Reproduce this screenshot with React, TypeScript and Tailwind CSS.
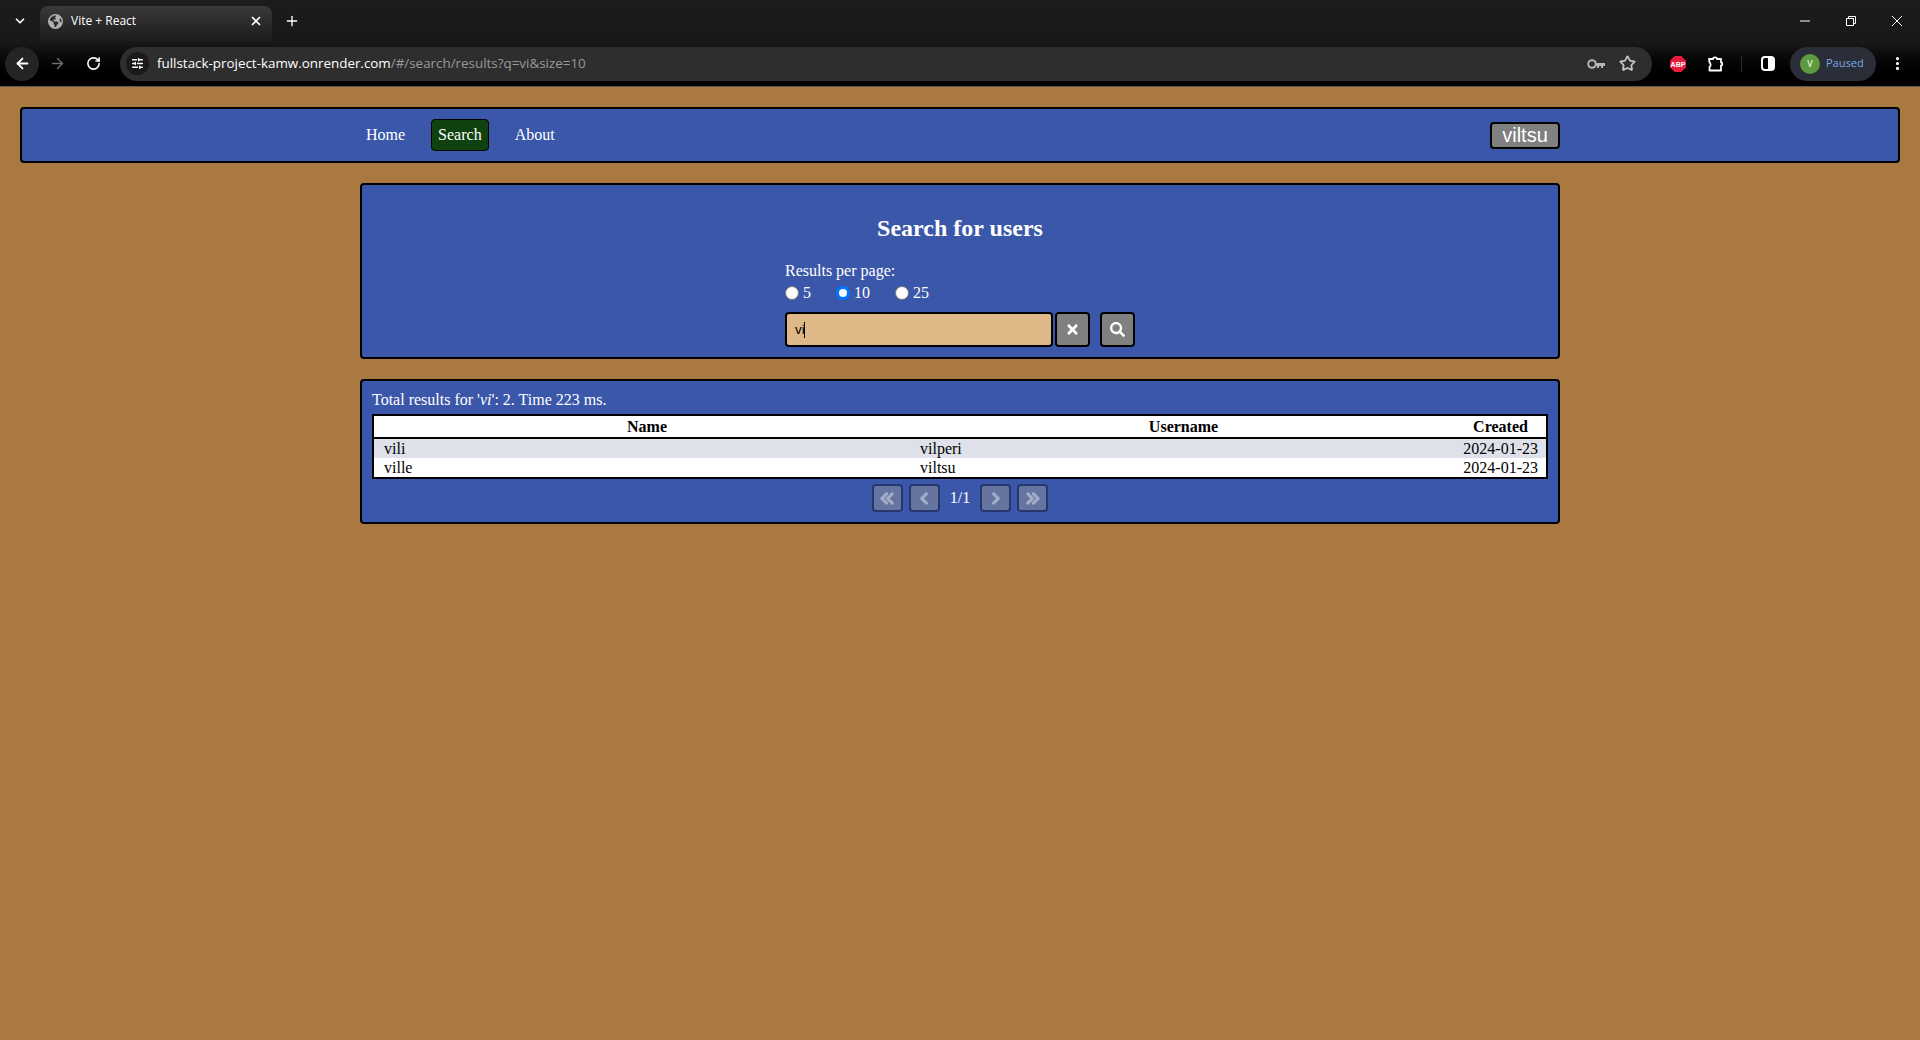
import { FaSearch, FaTimes } from 'react-icons/fa';
import { FaAngleLeft, FaAngleRight, FaAnglesLeft, FaAnglesRight, FaEarthAmericas } from 'react-icons/fa6';
import { ArrowLeft, ArrowRight, ChevronDown, MoreVertical, Plus, RotateCw, SlidersHorizontal, Star, X } from 'lucide-react';

const users = [
  { name: 'vili', username: 'vilperi', created: '2024-01-23' },
  { name: 'ville', username: 'viltsu', created: '2024-01-23' },
];

const sizes = [
  { label: '5', checked: false, width: 'w-[51px]' },
  { label: '10', checked: true, width: 'w-[59px]' },
  { label: '25', checked: false, width: 'w-auto' },
];

const BrowserBar = () => (
  <div className="h-[87px] border-b border-[#5a5a5a] bg-linear-to-b from-[#1c1c1c] via-[#181818] to-[#000000] text-white font-['Open_Sans',sans-serif]">
    {/* Tab strip */}
    <div className="flex h-[41px] items-end">
      <div className="flex h-[35px] w-[40px] items-center justify-center pb-[5px]">
        <ChevronDown size={14} strokeWidth={3} />
      </div>
      <div className="flex h-[35px] w-[232px] items-center rounded-t-lg bg-linear-to-b from-[#3a3a3a] to-[#1c1c1c] pr-[9px] pb-[5px] pl-2 text-[12px]">
        <FaEarthAmericas size={15} className="text-[#b0b0b0]" />
        <span className="ml-2 flex-1">Vite + React</span>
        <X size={14} strokeWidth={3} />
      </div>
      <div className="flex h-[35px] w-[40px] items-center justify-center pb-[5px]">
        <Plus size={16} />
      </div>
      <div className="ml-auto flex h-[41px] items-center gap-[36px] pr-[18px]">
        <svg width="10" height="10" viewBox="0 0 10 10" fill="none" stroke="white">
          <path d="M0 5H10" />
        </svg>
        <svg width="10" height="10" viewBox="0 0 10 10" fill="none" stroke="white">
          <path d="M2.5 2.5V.5H9.5V7.5H7.5M.5 2.5H7.5V9.5H.5Z" />
        </svg>
        <svg width="10" height="10" viewBox="0 0 10 10" fill="none" stroke="white">
          <path d="M0 0L10 10M10 0L0 10" />
        </svg>
      </div>
    </div>

    {/* Address row */}
    <div className="flex h-[45px] items-center">
      <div className="flex w-[120px] items-center pl-[5px]">
        <div className="flex h-[34px] w-[34px] items-center justify-center rounded-full bg-[#242424]">
          <ArrowLeft size={17} strokeWidth={2.5} />
        </div>
        <ArrowRight size={17} strokeWidth={2} className="ml-[10px] text-[#707070]" />
        <RotateCw size={15} strokeWidth={2.5} className="ml-[20px]" />
      </div>
      <div className="flex h-[34px] w-[1532px] items-center rounded-full bg-[#2e2e2e] pr-[16px] pl-[6px]">
        <div className="flex h-[23px] w-[23px] items-center justify-center rounded-full bg-[#1a1a1a]">
          <SlidersHorizontal size={13} strokeWidth={2.5} />
        </div>
        <span className="ml-[8px] text-[13.4px]">fullstack-project-kamw.onrender.com</span>
        <span className="text-[13.4px] text-[#9a9a9a]">/#/search/results?q=vi&amp;size=10</span>
        <svg width="18" height="12" viewBox="0 0 18 12" fill="none" className="ml-auto text-[#b5b5b5]">
          <circle cx="5" cy="6" r="3.8" stroke="currentColor" strokeWidth="2" />
          <path d="M9 5H18V8H16V10H14V8H12V10H10V8H9Z" fill="currentColor" />
        </svg>
        <Star size={17} strokeWidth={2.5} className="ml-[14px] text-[#c4c4c4]" />
      </div>
      <svg width="16" height="16" viewBox="0 0 16 16" className="ml-[18px]">
        <polygon points="4.7,0 11.3,0 16,4.7 16,11.3 11.3,16 4.7,16 0,11.3 0,4.7" fill="#e8193c" />
        <text x="8" y="10.5" textAnchor="middle" fontSize="7" fontWeight="700" fill="white" fontFamily="'Liberation Sans', sans-serif">ABP</text>
      </svg>
      <svg width="16" height="16" viewBox="0 0 16 16" fill="none" stroke="white" strokeWidth="1.8" strokeLinejoin="round" className="ml-[21px]">
        <path d="M2 3H6C6 .8 10 .8 10 3H14V6.5C16 6.5 16 9.5 14 9.5V14.5H2.5V11C4 10 4 7.5 2.5 6.5Z" />
      </svg>
      <div className="ml-[18px] h-[16px] w-px bg-[#2a2a2a]" />
      <div className="ml-[19px] flex h-[15px] w-[14px] rounded-sm border-2 border-white">
        <div className="w-1/2" />
        <div className="w-1/2 bg-white" />
      </div>
      <div className="ml-[15px] flex h-[34px] w-[86px] items-center rounded-full bg-[#2a2e38] pl-[10px]">
        <div className="flex h-[20px] w-[20px] items-center justify-center rounded-full bg-[#5e9b3f] text-[9px]">V</div>
        <span className="ml-[6px] text-[11px] text-[#7ea6e0]">Paused</span>
      </div>
      <MoreVertical size={17} strokeWidth={2.5} className="ml-[13px]" />
    </div>
  </div>
);

const Panel = ({ className, children }: { className: string; children: React.ReactNode }) => (
  <div className={`rounded border-2 border-black bg-[#3b57a9] ${className}`}>{children}</div>
);

const PageButton = ({ children }: { children: React.ReactNode }) => (
  <button className="flex h-[28px] w-[31px] items-center justify-center rounded border-2 border-[#26376f] bg-[#65759f] text-[#a5aecb]">
    {children}
  </button>
);

const App = () => {
  return (
    <div className="h-[1040px] overflow-hidden bg-[#aa7941] font-['Liberation_Serif',serif] text-[16px] text-white">
      <BrowserBar />

      {/* Nav */}
      <div className="mx-5 mt-[20px] flex h-[56px] justify-center rounded border-2 border-black bg-[#3b57a9]">
        <div className="flex w-[1200px] items-center justify-between">
          <div className="flex items-center gap-[26px] pl-[6px] leading-[18px]">
            <a>Home</a>
            <a className="rounded border border-black bg-[#104210] px-[6px] py-[6px]">Search</a>
            <a>About</a>
          </div>
          <button className="h-[27px] w-[70px] rounded border-2 border-black bg-[#808080] font-['Liberation_Sans',sans-serif] text-[20px] leading-none">
            viltsu
          </button>
        </div>
      </div>

      <div className="mx-auto w-[1200px]">
        {/* Search */}
        <Panel className="mt-[20px] h-[176px]">
          <h1 className="pt-[30px] text-center text-[24px] leading-[27px] font-bold">Search for users</h1>
          <div className="mt-[20px] ml-[423px]">
            <p className="leading-[18px]">Results per page:</p>
            <div className="mt-[4px] flex h-[18px] items-center">
              {sizes.map((size) => (
                <label key={size.label} className={`flex items-center ${size.width}`}>
                  <span
                    className={`h-[14px] w-[14px] rounded-full bg-white ${
                      size.checked ? 'border-[3px] border-[#0075ff]' : 'border border-[#767676]'
                    }`}
                  />
                  <span className="ml-[4px]">{size.label}</span>
                </label>
              ))}
            </div>
            <div className="mt-[10px] flex h-[35px]">
              <div className="flex w-[268px] items-center rounded border-2 border-black bg-[#deb887] pl-2 font-['Liberation_Sans',sans-serif] text-[13.33px] text-black">
                vi<span className="-ml-px h-[16px] w-px bg-black" />
              </div>
              <button className="ml-[2px] flex w-[35px] items-center justify-center rounded border-2 border-black bg-[#808080]">
                <FaTimes size={15} />
              </button>
              <button className="ml-[10px] flex w-[35px] items-center justify-center rounded border-2 border-black bg-[#808080]">
                <FaSearch size={15} />
              </button>
            </div>
          </div>
        </Panel>

        {/* Results */}
        <Panel className="mt-[20px] h-[145px] px-[10px]">
          <p className="pt-[10px] leading-[18px]">
            Total results for '<i>vi</i>': 2. Time 223 ms.
          </p>
          <table className="mt-[5px] w-full table-fixed border-2 border-black bg-white leading-[18px] text-black">
            <thead>
              <tr className="h-[23px] border-b-2 border-black">
                <th className="w-[547px] font-bold">Name</th>
                <th className="w-[527px] font-bold">Username</th>
                <th className="pl-[8px] font-bold">Created</th>
              </tr>
            </thead>
            <tbody>
              {users.map((user, i) => (
                <tr key={user.name} className={i === 0 ? 'h-[20px] bg-[#dee1e9]' : 'h-[20px]'}>
                  <td className="pl-[10px]">{user.name}</td>
                  <td>{user.username}</td>
                  <td className="pr-[8px] text-right">{user.created}</td>
                </tr>
              ))}
            </tbody>
          </table>
          <div className="mt-[5px] flex items-center justify-center">
            <PageButton>
              <FaAnglesLeft size={15} stroke="currentColor" strokeWidth={40} />
            </PageButton>
            <div className="ml-[6px]">
              <PageButton>
                <FaAngleLeft size={15} stroke="currentColor" strokeWidth={40} />
              </PageButton>
            </div>
            <span className="mx-[10px]">1/1</span>
            <PageButton>
              <FaAngleRight size={15} stroke="currentColor" strokeWidth={40} />
            </PageButton>
            <div className="ml-[6px]">
              <PageButton>
                <FaAnglesRight size={15} stroke="currentColor" strokeWidth={40} />
              </PageButton>
            </div>
          </div>
        </Panel>
      </div>
    </div>
  );
};

export default App;
